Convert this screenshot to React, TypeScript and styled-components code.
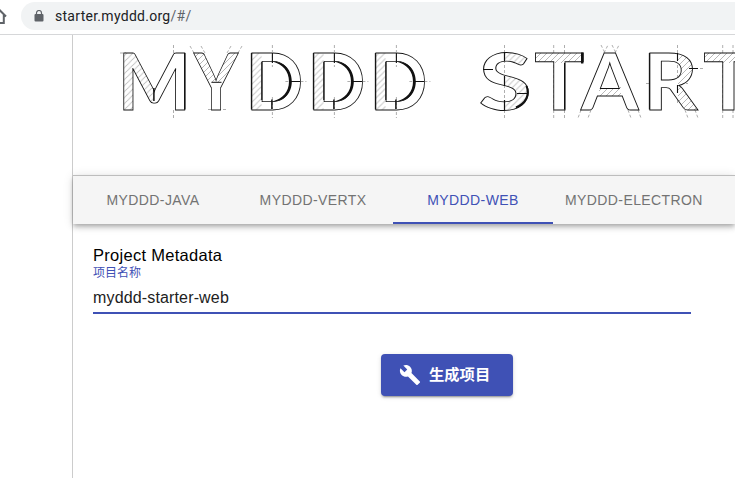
import React from "react";
import styled, { createGlobalStyle } from "styled-components";

const Global = createGlobalStyle`
  * { box-sizing: border-box; }
  body { margin: 0; background: #fff; overflow: hidden; }
`;

const sans = `"Liberation Sans", "Noto Sans CJK SC", sans-serif`;

const Window = styled.div`
  display: flex;
  flex-direction: column;
  width: 100vw;
  height: 100vh;
  overflow: hidden;
  font-family: ${sans};
`;

const BrowserBar = styled.header`
  display: flex;
  flex: none;
  align-items: flex-start;
  height: 35px;
  border-bottom: 1px solid #d6d7d9;
`;

const HomeIcon = styled.svg`
  flex: none;
  width: 21px;
  height: 34px;
`;

const AddressBar = styled.div`
  display: flex;
  flex: 1;
  align-items: center;
  height: 28px;
  margin-top: 2px;
  padding-left: 13px;
  border-radius: 14px 0 0 14px;
  background: #f1f3f4;
`;

const Address = styled.span`
  margin-left: 11px;
  font: 14px/20px Roboto, sans-serif;
  letter-spacing: 0.28px;
  color: #202124;
  white-space: nowrap;
`;

const Fragment = styled.span`
  color: #5f6368;
`;

const Viewport = styled.div`
  display: flex;
  flex: 1;
  padding-left: 72px;
`;

const Page = styled.main`
  flex: 1;
  min-width: 0;
  border-left: 1px solid #ccc;
`;

const Banner = styled.svg`
  display: block;
  width: 662px;
  height: 140px;
  overflow: visible;
`;

const TabBar = styled.nav`
  display: flex;
  height: 49px;
  border-top: 1px solid #bdbdbd;
  background: #f5f5f5;
  box-shadow: 0 2px 4px -1px rgba(0, 0, 0, 0.2), 0 4px 5px 0 rgba(0, 0, 0, 0.14),
    0 1px 10px 0 rgba(0, 0, 0, 0.12);
`;

const Tab = styled.button<{ $active?: boolean }>`
  flex: none;
  min-width: 160px;
  padding: 2px 12px 0;
  border: 0;
  border-bottom: 2px solid ${(p) => (p.$active ? "#3f51b5" : "transparent")};
  background: none;
  font: 14px/20px ${sans};
  letter-spacing: 0.4px;
  color: ${(p) => (p.$active ? "#3f51b5" : "#737373")};
`;

const Form = styled.form`
  display: flex;
  flex-direction: column;
  width: 598px;
  margin: 21px 0 0 20px;
`;

const Title = styled.div`
  height: 22px;
  font-size: 16.5px;
  line-height: 20px;
  letter-spacing: 0.28px;
  color: #000;
`;

const Label = styled.label`
  height: 13px;
  font-size: 12px;
  line-height: 13px;
  color: #3f51b5;
`;

const Input = styled.input`
  height: 34px;
  padding: 3px 0 0;
  border: 0;
  border-bottom: 2px solid #3f51b5;
  outline: 0;
  background: none;
  font: 16px/20px ${sans};
  letter-spacing: 0.15px;
  color: #212121;
`;

const Generate = styled.button`
  display: flex;
  align-items: center;
  align-self: center;
  gap: 8px;
  width: 132px;
  height: 42px;
  margin: 40px 0 0 110px;
  padding: 0 18px;
  border: 0;
  border-radius: 4px;
  background: #3f51b5;
  box-shadow: 0 3px 1px -2px rgba(0, 0, 0, 0.2), 0 2px 2px 0 rgba(0, 0, 0, 0.14),
    0 1px 5px 0 rgba(0, 0, 0, 0.12);
  font: 700 15.3px/26px ${sans};
  color: #fff;
  white-space: nowrap;
`;

const Letter = styled.text<{ $shade: number }>`
  font: 700 79px Lato, sans-serif;
  fill: url(#shade${(p) => p.$shade});
  stroke: #111;
  stroke-width: 0.85px;
`;

const Guide = styled.path`
  fill: none;
  stroke: #999;
  stroke-width: 0.8px;
  stroke-dasharray: 3 2;
`;

const Ink = styled.path<{ $weight: number }>`
  fill: none;
  stroke: #111;
  stroke-width: ${(p) => p.$weight}px;
`;

const Crescent = styled.path`
  fill: #111;
`;

// Each letter: character, left edge of the ink, side bearing, horizontal stretch.
const letters: [string, number, number, number][] = [
  ["M", 123, 5.6, 0.985],
  ["Y", 194, 0, 0.86],
  ["D", 251.4, 6, 0.96],
  ["D", 313.4, 6, 0.96],
  ["D", 375.4, 6, 0.96],
  ["S", 481, 2, 1.23],
  ["T", 535.4, 1, 1.06],
  ["A", 581, 0, 1.05],
  ["R", 649.4, 6, 1.08],
  ["T", 704.4, 1, 1.06],
];

// Parts of the lettering that carry diagonal hatching.
const hatched: [number, number, number, number][] = [
  [122, 50, 31.7, 62],
  [193, 50, 48, 32.5],
  [250, 50, 11.5, 62],
  [312, 50, 11.5, 62],
  [374, 50, 11.5, 62],
  [504.5, 50, 27, 20],
  [504.5, 77, 27, 34],
  [534, 50, 47, 13],
  [599, 86, 22, 12],
  [678, 50, 24, 62],
  [703, 50, 40, 13],
];

const bowls = [251.4, 313.4, 375.4];

const Blueprint = () => (
  <Banner viewBox="73 35 662 140" role="img" aria-label="MYDDD START">
    <defs>
      <pattern id="hatch" width="6" height="6" patternUnits="userSpaceOnUse">
        <path d="M-1 7 7-1M-1 1 1-1M5 7 7 5" stroke="#999" strokeWidth=".7" />
      </pattern>
      {letters.map(([, x, bearing, stretch], i) => (
        <pattern
          key={i}
          id={`shade${i}`}
          width="800"
          height="180"
          patternUnits="userSpaceOnUse"
          patternTransform={`scale(${1 / stretch} 1) translate(${-(x - bearing * stretch)} -109.5)`}
        >
          <rect width="800" height="180" fill="#fff" />
          {hatched.map(([hx, hy, w, h]) => (
            <rect key={`${hx}-${hy}`} x={hx} y={hy} width={w} height={h} fill="url(#hatch)" />
          ))}
        </pattern>
      ))}
    </defs>

    <Guide d="M173.5 45V53M173.5 110V118M504.5 45V118M553.7 45V118M564.5 45V118M677.5 45V103M722.7 45V118M733 45V118M646 83.5H688M690 68.5H703" />
    <Guide d="M190 46 194 53M201 46 205 53M227 53 231 46M238 53 242 46M601 45 605 53M604 53 608 45M612 45 616 53M615 53 619 45M581 110 578 118M591 110 588 118M628 110 631 118M638 110 641 118M685 110 688 118M695 110 698 118" />
    <Guide d="M120 53H126M208 109.5H226" />

    {letters.map(([char, x, bearing, stretch], i) => (
      <Letter
        key={i}
        $shade={i}
        transform={`translate(${x - bearing * stretch} 109.5) scale(${stretch} 1)`}
      >
        {char}
      </Letter>
    ))}

    <Ink $weight={1.5} d="M184.8 53V109.5M153.9 88V101" />
    <Ink $weight={1} d="M211.5 82.3H221.5" />

    {bowls.map((x) => (
      <g key={x} transform={`translate(${x} 0)`}>
        <Guide d="M21 45V67M21 97V118M34 81.5H55" />
        <Ink $weight={1.1} d="M21 53V63M39 81.5H49M0 53V109.5M10.4 62V100" />
        <Ink $weight={1.5} d="M20.5 99.5V109" />
        <Crescent d="M21 61.5C34 61.5 40.4 71 40.4 81.5S34 101.5 21 101.5C31 99 37.6 92 37.6 81.5S31 64 21 61.5Z" />
      </g>
    ))}

    <Ink $weight={1.2} d="M504.5 52V61M483 69.5H493M504.5 76V86M504.5 100V110M517 93.5H528M564.6 63V109.5" />
    <Ink $weight={2.4} d="M582.2 52.5V63.5" />
    <Ink $weight={2} d="M526.5 86C530 95 526 103 516 107.5" />
    <Ink $weight={1.1} d="M677.5 53V61M689 68.5H698M677.5 85V93M649.4 53V109.5" />
  </Banner>
);

const tabs = ["MYDDD-JAVA", "MYDDD-VERTX", "MYDDD-WEB", "MYDDD-ELECTRON"];

export default function App() {
  return (
    <Window>
      <Global />
      <BrowserBar>
        <HomeIcon viewBox="0 0 21 34" fill="none" stroke="#5f6368" strokeWidth="2">
          <path d="M-8 17 -1 9.5 6 16.5M3.8 15V23H-6" />
        </HomeIcon>
        <AddressBar>
          <svg width="10" height="12" viewBox="0 0 10 12">
            <rect x=".5" y="4" width="9" height="7.5" rx="1" fill="#5f6368" />
            <path d="M2.5 4.5V3a2.5 2.5 0 0 1 5 0v1.5" fill="none" stroke="#5f6368" strokeWidth="1.2" />
          </svg>
          <Address>
            starter.myddd.org<Fragment>/#/</Fragment>
          </Address>
        </AddressBar>
      </BrowserBar>
      <Viewport>
        <Page>
          <Blueprint />
          <TabBar>
            {tabs.map((name) => (
              <Tab key={name} $active={name === "MYDDD-WEB"}>
                {name}
              </Tab>
            ))}
          </TabBar>
          <Form>
            <Title>Project Metadata</Title>
            <Label htmlFor="name">项目名称</Label>
            <Input id="name" defaultValue="myddd-starter-web" />
            <Generate type="button">
              <svg width="22" height="22" viewBox="0 0 24 24" fill="#fff">
                <path d="M22.7 19l-9.1-9.1c.9-2.3.4-5-1.5-6.9-2-2-5-2.4-7.4-1.3L9 6 6 9 1.6 4.7C.4 7.1.9 10.1 2.9 12.1c1.9 1.9 4.6 2.4 6.9 1.5l9.1 9.1c.4.4 1 .4 1.4 0l2.3-2.3c.5-.4.5-1.1.1-1.4z" />
              </svg>
              生成项目
            </Generate>
          </Form>
        </Page>
      </Viewport>
    </Window>
  );
}
